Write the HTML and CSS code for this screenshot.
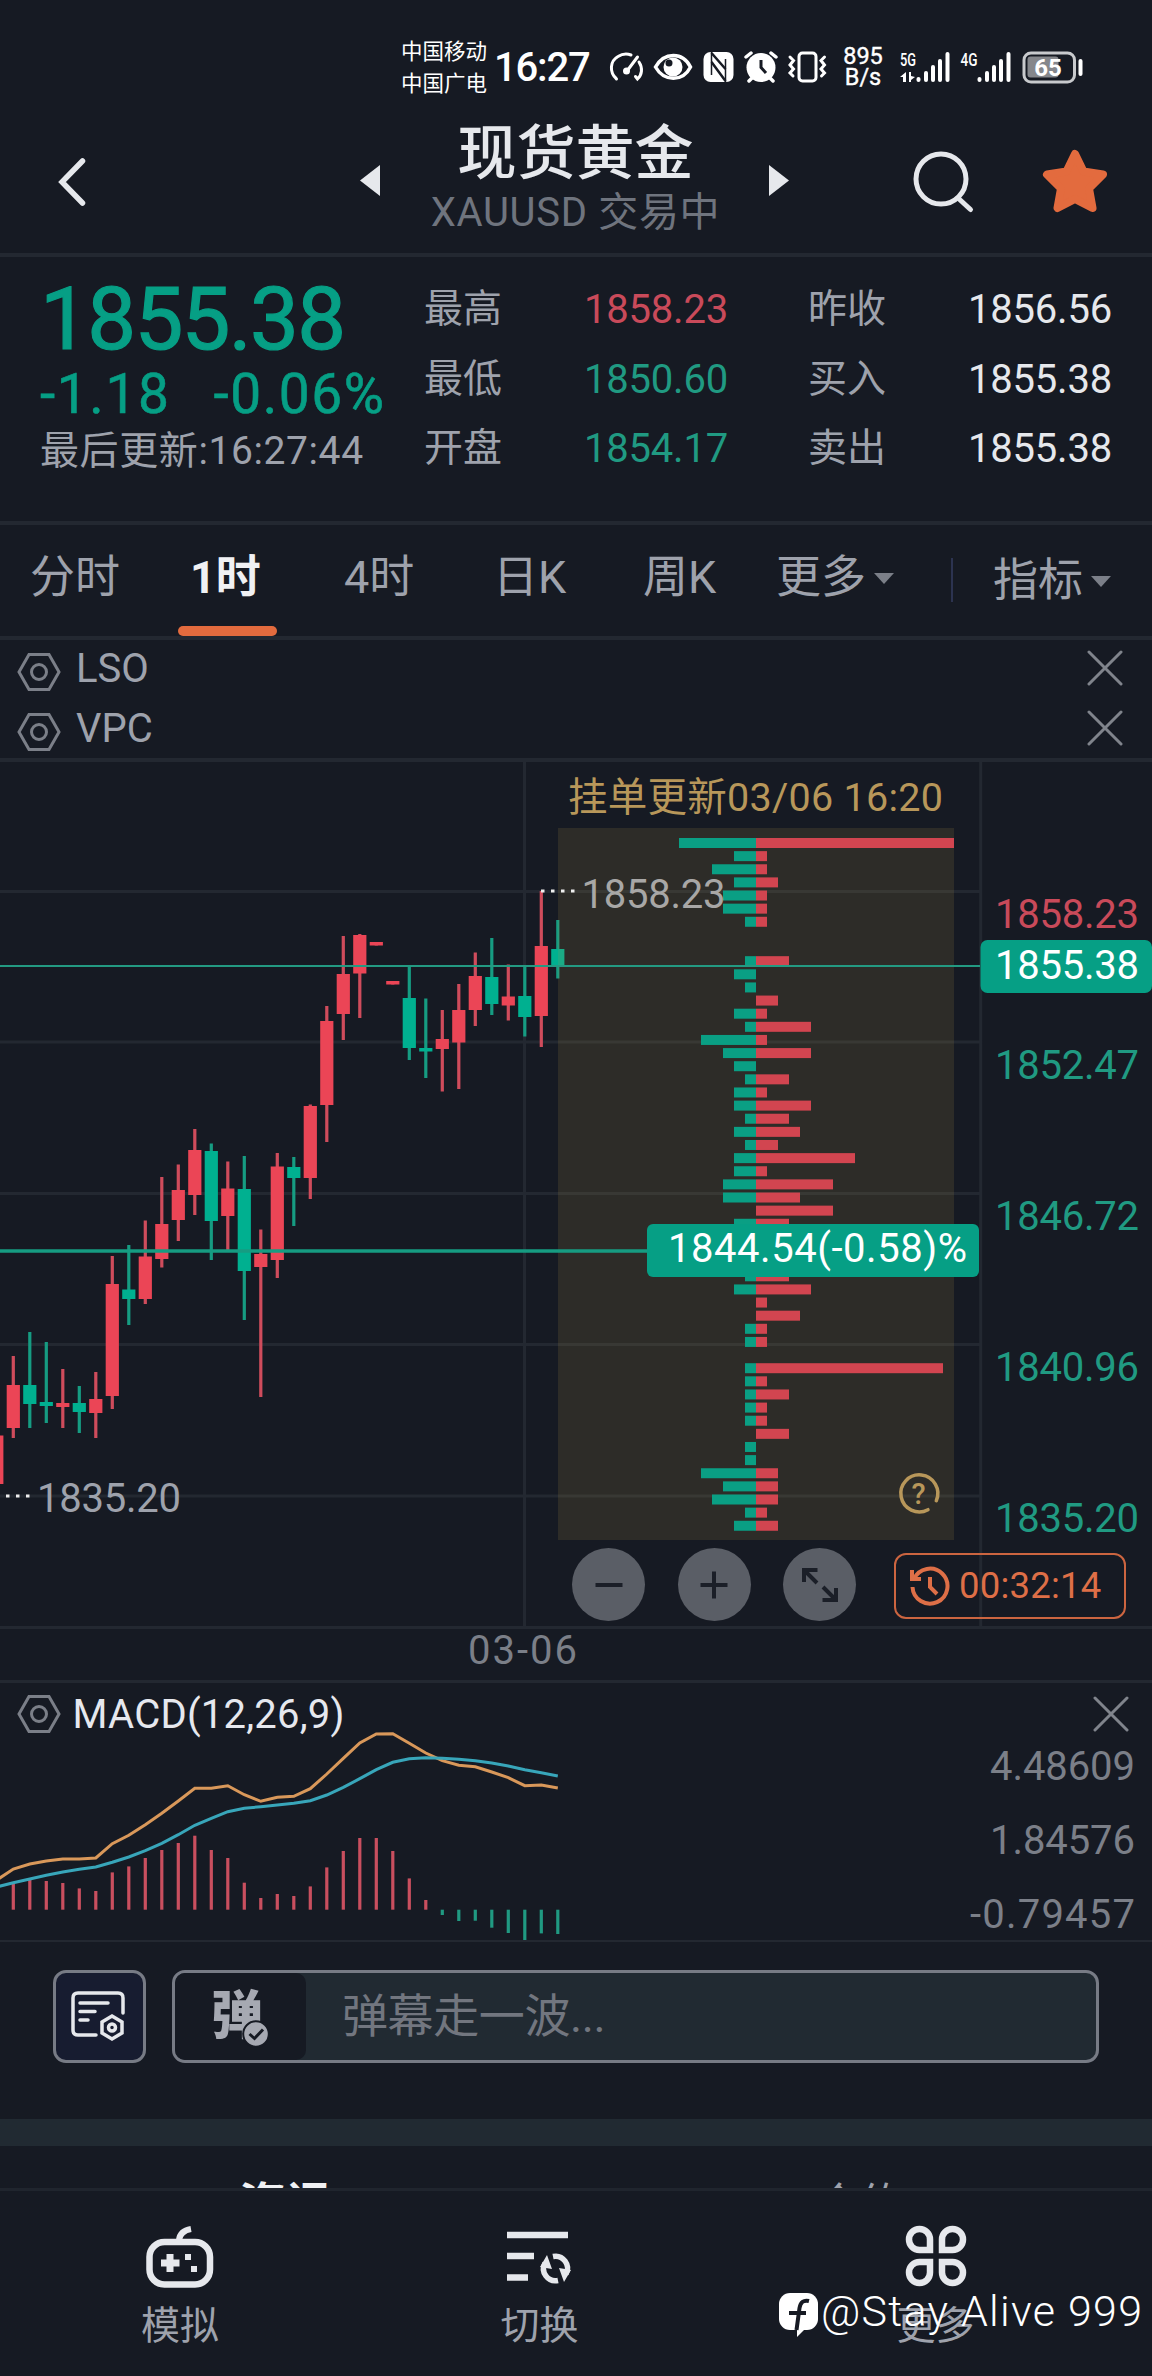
FILE: index.html
```html
<!DOCTYPE html>
<html lang="zh-CN">
<head>
  <meta charset="UTF-8" />
  <meta name="viewport" content="width=device-width, initial-scale=1.0" />
  <title>现货黄金 XAUUSD</title>
  <link rel="stylesheet" href="styles.css">
</head>
<body>
  <svg width="0" height="0" class="defs">
    <symbol id="hex" viewBox="0 0 44 40">
      <path d="M12 2.500H32L42 20L32 37.500H12L2 20Z" fill="none" stroke="#7b7f88" stroke-width="3" />
      <circle cx="22" cy="20" r="7.500" fill="none" stroke="#7b7f88" stroke-width="3" />
    </symbol>
    <symbol id="cross" viewBox="0 0 36 36">
      <path d="M2 2L34 34M34 2L2 34" fill="none" stroke="#80848c" stroke-width="3" stroke-linecap="round" />
    </symbol>
  </svg>

  <div class="status-bar">
    <div class="carrier"><span>中国移动</span><span>中国广电</span></div>
    <div class="clock">16:27</div>
    <svg class="status-icons" width="222" height="36" viewBox="608 49 222 36">
      <g fill="none" stroke="#fff" stroke-width="3" stroke-linecap="round">
        <path d="M616.500 79L614.500 76.500M616.500 79C609 72 610 61 618 56.500C622 54 627 53.500 631 55M639 62C643 68 642 75 637.500 79L635.500 76.500" />
        <path d="M627 71L637.500 57" />
      </g>
      <circle cx="626.500" cy="71" r="3.500" fill="#fff" />
      <path d="M655.500 67C664 51.500 683 51.500 690.500 67C683 82 664 82 655.500 67Z" fill="none" stroke="#fff" stroke-width="3.500" />
      <circle cx="673" cy="67" r="9.500" fill="#fff" />
      <circle cx="669" cy="63" r="3.500" fill="#161a23" />
      <rect x="703.500" y="52" width="30" height="30" rx="7" fill="#fff" />
      <path d="M711.500 52V75M725.500 82V59" fill="none" stroke="#161a23" stroke-width="1.500" />
      <path d="M711.500 53L725.500 69M711.500 62L725.500 81" fill="none" stroke="#161a23" stroke-width="2.500" />
      <circle cx="761" cy="67.500" r="14.500" fill="#fff" />
      <path d="M746 57L751 53M776 57L771 53M752 78L749 81M770 78L773 81" stroke="#fff" stroke-width="3.500" stroke-linecap="round" />
      <path d="M761 60V67.500L766 73" fill="none" stroke="#161a23" stroke-width="3" />
      <rect x="799" y="53" width="17" height="28" rx="3.500" fill="none" stroke="#fff" stroke-width="3" />
      <path d="M790 57L793.500 60.500L790 65L793.500 69L790 73L793 76M824.500 57L821 60.500L824.500 65L821 69L824.500 73L821.500 76" fill="none" stroke="#fff" stroke-width="3" stroke-linecap="round" />
    </svg>
    <div class="speed"><span>895</span><span>B/s</span></div>
    <svg class="signals" width="186" height="40" viewBox="898 47 186 40">
      <g fill="#fff">
        <text x="900" y="65.500" class="net" textLength="16" lengthAdjust="spacingAndGlyphs">5G</text>
        <path d="M906 72V82H903V77H900ZM909 82V72H911V76L915 77L911 80V82Z" />
        <rect x="916.500" y="77" width="4" height="5" rx="2" />
        <rect x="924" y="71" width="4" height="11" rx="2" />
        <rect x="931" y="65" width="4" height="17" rx="2" />
        <rect x="938" y="59" width="4" height="23" rx="2" />
        <rect x="945.500" y="52" width="4" height="30" rx="2" />
        <text x="960.500" y="65.500" class="net" textLength="17" lengthAdjust="spacingAndGlyphs">4G</text>
        <rect x="977.500" y="77" width="4" height="5" rx="2" />
        <rect x="985" y="71" width="4" height="11" rx="2" />
        <rect x="992" y="65" width="4" height="17" rx="2" />
        <rect x="999" y="59" width="4" height="23" rx="2" />
        <rect x="1006.500" y="52" width="4" height="30" rx="2" />
        <rect x="1078.500" y="59" width="4" height="17" rx="2" />
      </g>
      <rect x="1027.500" y="56.500" width="31" height="21" rx="3" fill="#85878c" />
      <rect x="1024" y="53" width="50.500" height="29" rx="7" fill="none" stroke="#c8cacd" stroke-width="3" />
      <text x="1048" y="76" class="battery">65</text>
    </svg>
  </div>

  <header class="header">
    <svg class="back" width="34" height="54" viewBox="0 0 34 54"><path d="M28.500 6L8 27L28.500 48" /></svg>
    <svg class="prev" width="20" height="31" viewBox="0 0 20 31"><path d="M20 0V31L0 15.500Z" /></svg>
    <div class="title">
      <h1>现货黄金</h1>
      <p>XAUUSD 交易中</p>
    </div>
    <svg class="next" width="20" height="31" viewBox="0 0 20 31"><path d="M0 0V31L20 15.500Z" /></svg>
    <svg class="search" width="64" height="66" viewBox="0 0 64 66"><circle cx="30" cy="31" r="25" /><path d="M47 50L59.500 61.500" /></svg>
    <svg class="star" width="66" height="64" viewBox="0 0 66 64">
      <path d="M33 5L41.500 22.500L61 25.500L47 39.500L50.500 59L33 50L15.500 59L19 39.500L5 25.500L24.500 22.500Z" />
    </svg>
  </header>

  <section class="quote">
    <div class="price">
      <div class="last">1855.38</div>
      <div class="change"><span>-1.18</span><span>-0.06%</span></div>
      <div class="updated">最后更新:16:27:44</div>
    </div>
    <dl class="stats">
      <dt>最高</dt><dd class="red">1858.23</dd>
      <dt>昨收</dt><dd>1856.56</dd>
      <dt>最低</dt><dd class="green">1850.60</dd>
      <dt>买入</dt><dd>1855.38</dd>
      <dt>开盘</dt><dd class="green">1854.17</dd>
      <dt>卖出</dt><dd>1855.38</dd>
    </dl>
  </section>

  <nav class="periods">
    <a>分时</a>
    <a class="active">1时</a>
    <a>4时</a>
    <a>日K</a>
    <a>周K</a>
    <a>更多<i class="caret"></i></a>
    <a class="indicator">指标<i class="caret"></i></a>
  </nav>

  <section class="studies">
    <div class="study">
      <svg class="hex" width="44" height="40"><use href="#hex" /></svg>
      <span>LSO</span>
      <svg class="cross" width="36" height="36"><use href="#cross" /></svg>
    </div>
    <div class="study">
      <svg class="hex" width="44" height="40"><use href="#hex" /></svg>
      <span>VPC</span>
      <svg class="cross" width="36" height="36"><use href="#cross" /></svg>
    </div>
  </section>

  <section class="chart">
    <svg width="1152" height="864" viewBox="0 0 1152 864">
      <path class="grid" d="M0 129.500H980M0 280H980M0 431.500H980M0 582.500H980M0 734H980M524.500 0V864M980.700 0V864" />
      <g id="candles"></g>
      <rect x="558" y="66" width="396" height="712" fill="#b69248" fill-opacity=".15" />
      <g id="profile"></g>

      <path d="M0 204H980" stroke="#239a82" stroke-width="2" />
      <path d="M0 489H648" stroke="#169c82" stroke-width="3.500" />
      <path d="M541 129H575" stroke="#eee" stroke-width="3" stroke-dasharray="3.500 6.500" />
      <path d="M6 734H31" stroke="#eee" stroke-width="3" stroke-dasharray="3.500 6.500" />

      <text x="568" y="49" class="gold" textLength="375">挂单更新03/06 16:20</text>
      <text x="581.500" y="146" fill="#a8a7a6" textLength="144">1858.23</text>
      <text x="37" y="750" fill="#9ea2ac" textLength="144">1835.20</text>
      <text x="995" y="166" fill="#c94a5a" textLength="144">1858.23</text>
      <g fill="#209a82">
        <text x="995" y="317" textLength="144">1852.47</text>
        <text x="995" y="468" textLength="144">1846.72</text>
        <text x="995" y="619" textLength="144">1840.96</text>
        <text x="995" y="770" textLength="144">1835.20</text>
      </g>
      <rect x="980.500" y="178" width="171.500" height="53" rx="7" fill="#069f85" />
      <text x="995" y="217" fill="#fff" textLength="144">1855.38</text>
      <rect x="647" y="462" width="332" height="53" rx="6" fill="#069f85" />
      <text x="668" y="500" fill="#fff" textLength="299">1844.54(-0.58)%</text>

      <path d="M936.300 738.700A18.500 18.500 0 1 0 928 747.700" fill="none" stroke="#b8975a" stroke-width="3.500" stroke-linecap="round" />
      <text x="918.500" y="742" class="help">?</text>
    </svg>
    <div class="zoom">
      <button><svg width="40" height="40" viewBox="0 0 40 40"><path d="M6.500 20H33.500" /></svg></button>
      <button><svg width="40" height="40" viewBox="0 0 40 40"><path d="M6.500 20H33.500M20 6.500V33.500" /></svg></button>
      <button><svg width="40" height="40" viewBox="0 0 40 40"><path d="M17 18L5 6M17.500 5H4V17M23 22L35 34M22.500 35H36V23" /></svg></button>
    </div>
    <div class="timer">
      <svg width="42" height="42" viewBox="0 0 42 42"><path d="M5 14A17.500 17.500 0 1 1 3.500 22M3 5V14H12M21 12V22L28 29" /></svg>
      <span>00:32:14</span>
    </div>
  </section>

  <div class="date">03-06</div>

  <section class="macd">
    <svg width="1152" height="257" viewBox="0 0 1152 257">
      <g id="histogram"></g>
      <polyline id="dif" class="dif" />
      <polyline id="dea" class="dea" />
      <use href="#hex" x="17" y="11" width="44" height="40" />
      <use href="#cross" x="1093" y="13" width="36" height="36" />
      <text x="72.500" y="45" fill="#e6e8ee" textLength="272">MACD(12,26,9)</text>
      <g fill="#7b7f88">
        <text x="990" y="97" textLength="145">4.48609</text>
        <text x="990" y="171" textLength="145">1.84576</text>
        <text x="970" y="245" textLength="165">-0.79457</text>
      </g>
    </svg>
  </section>

  <section class="comment">
    <div class="note">
      <svg width="60" height="60" viewBox="0 0 60 60">
        <path d="M54 26V11Q54 6 49 6H9Q4 6 4 11V43Q4 48 9 48H27M11 16H39M11 24.500H26M11 33H19" />
        <path d="M43 29L53 35V46L43 52L33 46V35Z" />
        <circle cx="43" cy="40.500" r="3.500" />
      </svg>
    </div>
    <div class="field">
      <div class="bullet">弹
        <svg width="28" height="28" viewBox="0 0 28 28"><circle cx="14" cy="14" r="12.800" fill="#a6a9b2" stroke="#161a23" stroke-width="2" /><path d="M7.500 14L12.500 18.500L21 9.500" fill="none" stroke="#161a23" stroke-width="3" /></svg>
      </div>
      <span>弹幕走一波...</span>
    </div>
  </section>

  <div class="news">
    <b>资讯</b>
    <span>合约</span>
  </div>

  <footer class="tabbar">
    <div>
      <svg width="70" height="66" viewBox="0 0 70 66">
        <rect x="4.500" y="19" width="60.500" height="42.500" rx="15" fill="none" stroke="#e6e8ec" stroke-width="6.500" />
        <path d="M34 17Q35 8 46 6" fill="none" stroke="#e6e8ec" stroke-width="6" />
        <path d="M40 31H46V37H40ZM46 43H52V49H46Z" fill="#e6e8ec" />
        <path d="M16 40H34.500M25 31V49" stroke="#e6e8ec" stroke-width="7" />
      </svg>
      <span>模拟</span>
    </div>
    <div>
      <svg width="70" height="66" viewBox="0 0 70 66">
        <path d="M2 12H63M2 33H29M2 54.500H23" stroke="#e6e8ec" stroke-width="6.500" />
        <path d="M48 33.500A12 12 0 0 1 61 51M53 57.500A12 12 0 0 1 40 40" fill="none" stroke="#e6e8ec" stroke-width="5.500" />
        <path d="M35 44L42 32L47 46ZM66 47L59 59L54 45Z" fill="#e6e8ec" />
      </svg>
      <span>切换</span>
    </div>
    <div>
      <svg width="70" height="66" viewBox="0 0 70 66">
        <g fill="none" stroke="#e6e8ec" stroke-width="6.500">
          <path d="M29 27V16.500A10.500 10.500 0 1 0 18.500 27Z" />
          <path d="M41 27V16.500A10.500 10.500 0 1 1 51.500 27Z" />
          <path d="M29 39V49.500A10.500 10.500 0 1 1 18.500 39Z" />
          <path d="M41 39V49.500A10.500 10.500 0 1 0 51.500 39Z" />
        </g>
      </svg>
      <span>更多</span>
    </div>
  </footer>

  <svg class="watermark" width="373" height="64" viewBox="0 0 373 64">
    <rect y="10" width="39" height="37" rx="11" fill="#fff" />
    <path d="M18 45V54L28 44Z" fill="#fff" />
    <path d="M30 18Q22 16 20.500 25L17.500 47M10 30H27" fill="none" stroke="#161a23" stroke-width="4" />
    <text x="42" y="43" textLength="321">@Stay Alive 999</text>
  </svg>

  <script src="script.js"></script>
</body>
</html>
```
FILE: styles.css
```css
* {
  box-sizing: border-box;
}
body {
  margin: 0;
  width: 1152px;
  height: 2376px;
  overflow: hidden;
  position: relative;
  background: #161a23;
  color: #9ea2ac;
  font-family: Roboto, "Noto Sans CJK SC", sans-serif;
  font-size: 40px;
}
svg {
  display: block;
  flex: none;
}
svg text {
  font-size: 40px;
}
.defs {
  position: absolute;
}
.red {
  color: #c94a5a;
}
.green {
  color: #209a82;
}

/* status bar */
.status-bar {
  display: flex;
  height: 110px;
  padding-left: 401px;
  color: #fff;
}
.carrier {
  display: flex;
  flex-direction: column;
  width: 93px;
  padding-top: 36px;
  font-size: 21.5px;
  line-height: 32px;
}
.clock {
  width: 114px;
  padding-top: 44px;
  font-weight: 500;
  line-height: 48px;
  letter-spacing: -1.2px;
}
.status-icons {
  margin-top: 49px;
}
.speed {
  display: flex;
  flex-direction: column;
  align-items: center;
  width: 66px;
  padding-top: 46px;
  font-size: 23.5px;
  line-height: 21px;
  -webkit-text-stroke: 0.4px #fff;
}
.signals {
  margin-top: 47px;
  margin-left: 2px;
}
.signals .net {
  font-size: 19px;
  font-weight: 500;
}
.signals .battery {
  fill: #fff;
  font-size: 24px;
  font-weight: 700;
  text-anchor: middle;
}

/* header */
.header {
  display: flex;
  align-items: flex-start;
  height: 147px;
  border-bottom: 4px solid #232831;
}
.back {
  margin: 45px 0 0 54px;
  fill: none;
  stroke: #e6e8ec;
  stroke-width: 5.5;
  stroke-linecap: round;
}
.prev, .next {
  margin-top: 55px;
  fill: #e6e8ec;
}
.prev {
  margin-left: 272px;
}
.title {
  width: 389px;
  padding: 14px 0 0 2px;
  text-align: center;
}
.title h1 {
  margin: 0 0 5px;
  color: #e6e8ec;
  font-size: 59px;
  font-weight: 500;
  line-height: 60px;
}
.title p {
  margin: 0;
  color: #6f747e;
  line-height: 48px;
  letter-spacing: 0.7px;
}
.search {
  margin: 38px 0 0 122px;
  fill: none;
  stroke: #e6e8ec;
  stroke-width: 5;
  stroke-linecap: round;
}
.star {
  margin: 39px 0 0 67px;
  fill: #e36b3e;
  stroke: #e36b3e;
  stroke-width: 8;
  stroke-linejoin: round;
}

/* quote */
.quote {
  display: flex;
  height: 268px;
  padding: 17px 0 0 40px;
  border-bottom: 4px solid #232831;
}
.price {
  width: 384px;
  color: #069f85;
}
.last {
  font-size: 87px;
  line-height: 90px;
  letter-spacing: -1.7px;
  -webkit-text-stroke: 1.2px #069f85;
}
.change {
  display: flex;
  gap: 43px;
  font-size: 55px;
  line-height: 60px;
  letter-spacing: 1.6px;
  white-space: nowrap;
  -webkit-text-stroke: 0.6px #069f85;
}
.updated {
  padding-top: 3px;
  color: #9ea2ac;
  font-size: 39px;
  line-height: 48px;
  letter-spacing: 0.6px;
}
.stats {
  display: grid;
  grid-template-columns: 100px 204px 180px 204px;
  grid-template-rows: repeat(3, 69.5px);
  margin: 0;
  padding-top: 1px;
  line-height: 69.5px;
}
.stats dt {
  font-size: 39px;
}
.stats dt:nth-of-type(even) {
  padding-left: 80px;
}
.stats dd {
  margin: 0;
  letter-spacing: -0.2px;
  text-align: right;
}
.stats dd:nth-of-type(even) {
  color: #e6e8ec;
}

/* period tabs */
.periods {
  display: grid;
  grid-template-columns: 160px 154px 149px 150px 133px 174px auto;
  height: 115px;
  padding-left: 30px;
  border-bottom: 4px solid #232831;
  font-size: 45px;
  line-height: 105px;
}
.periods a {
  position: relative;
}
.periods .active {
  color: #f0f1f4;
  font-weight: 700;
}
.periods .active::after {
  content: "";
  position: absolute;
  left: -12px;
  bottom: 0;
  width: 99px;
  height: 10px;
  border-radius: 5px;
  background: #e36b3e;
}
.caret {
  display: inline-block;
  margin-left: 8px;
  border: 10px solid transparent;
  border-top: 11px solid #7b7f88;
  border-bottom: 0;
  vertical-align: 9px;
}
.periods .indicator {
  padding: 3px 0 0 43px;
}
.periods .indicator::before {
  content: "";
  position: absolute;
  left: 1px;
  top: 33px;
  width: 2px;
  height: 44px;
  background: #2c3350;
}

/* studies */
.studies {
  height: 118px;
}
.study {
  display: flex;
  height: 59.5px;
  padding-left: 17px;
  line-height: 57px;
}
.study span {
  width: 1026px;
  padding-left: 15px;
}
.study .hex {
  margin-top: 12px;
}
.study .cross {
  margin: 10px 0 0 0;
}

/* chart */
.chart {
  position: relative;
  height: 871px;
  border-top: 4px solid #232831;
  border-bottom: 3px solid #232831;
}
.grid {
  fill: none;
  stroke: #232831;
  stroke-width: 3;
}
.chart .gold {
  fill: #b8975a;
  font-size: 39.5px;
}
.chart .help {
  fill: #b8975a;
  font-size: 29px;
  font-weight: 500;
  text-anchor: middle;
}
.zoom {
  position: absolute;
  left: 572px;
  top: 786px;
  display: flex;
  gap: 32.5px;
}
.zoom button {
  display: flex;
  align-items: center;
  justify-content: center;
  width: 73px;
  height: 73px;
  padding: 0;
  border: none;
  border-radius: 50%;
  background: #5a5e66;
}
.zoom path {
  fill: none;
  stroke: #1b1f28;
  stroke-width: 4;
}
.timer {
  position: absolute;
  left: 894px;
  top: 791px;
  display: flex;
  align-items: center;
  width: 232px;
  height: 66px;
  padding-left: 13px;
  border: 2px solid #cc6540;
  border-radius: 12px;
  color: #de6f47;
  font-size: 36.5px;
}
.timer span {
  padding: 0 0 2px 8px;
  letter-spacing: 0.2px;
}
.timer path {
  fill: none;
  stroke: #de6f47;
  stroke-width: 4;
}
.date {
  height: 51px;
  padding-left: 468px;
  color: #7b7f88;
  line-height: 44px;
  letter-spacing: 2px;
}

/* macd */
.macd {
  height: 262px;
  border-top: 3px solid #232831;
  border-bottom: 2px solid #232831;
}
.dif, .dea {
  fill: none;
  stroke-width: 3;
}
.dif {
  stroke: #d9985a;
}
.dea {
  stroke: #38a6ba;
}

/* comment */
.comment {
  display: flex;
  gap: 26px;
  height: 177px;
  padding: 28px 0 0 53px;
}
.note, .field {
  height: 93px;
  border: 3px solid #777b85;
  border-radius: 13px;
}
.note {
  display: flex;
  align-items: center;
  justify-content: center;
  width: 93px;
  padding-right: 2px;
  background: #171c30;
}
.note path, .note circle {
  fill: none;
  stroke: #e6e8ec;
  stroke-width: 3.5;
  stroke-linecap: round;
}
.field {
  display: flex;
  width: 927px;
  background: #212a32;
  color: #72767f;
  font-size: 46px;
  line-height: 87px;
}
.bullet {
  position: relative;
  width: 131px;
  padding-left: 36px;
  border-radius: 10px;
  background: #161a23;
  color: #a6a9b2;
  font-size: 52px;
  font-weight: 900;
}
.bullet svg {
  position: absolute;
  left: 67px;
  top: 47px;
}
.field span {
  padding-left: 36px;
  letter-spacing: -0.4px;
}

/* news tabs, cut off by the tab bar */
.news {
  display: grid;
  grid-template-columns: 577px auto;
  height: 69px;
  padding: 27px 0 0 239px;
  border-top: 27px solid #212a32;
  font-size: 44px;
  line-height: 64px;
  overflow: hidden;
}
.news b {
  color: #f0f1f4;
  font-size: 47px;
}

/* bottom tab bar */
.tabbar {
  display: grid;
  grid-template-columns: 360px 359px 433px;
  height: 188px;
  padding-top: 32px;
  border-top: 3px solid #20252e;
  font-size: 39px;
  line-height: 48px;
}
.tabbar div {
  display: flex;
  flex-direction: column;
  align-items: center;
  gap: 13px;
}
.watermark {
  position: absolute;
  left: 779px;
  top: 2283px;
}
.watermark text {
  fill: #fff;
  font-size: 43px;
  font-weight: 300;
}
```
FILE: script.js
```js
const NS = 'http://www.w3.org/2000/svg';
const STEP = 16.5;
const FIRST = 13.3;

// high, body top, body bottom, low, up (1) or down (0)
const candles = [
  [673.5, 673.5, 722, 722, 1],
  [594, 623, 666, 676, 1],
  [570, 623, 642, 666, 0],
  [580, 640, 644, 661, 0],
  [607, 641, 645, 666, 1],
  [624, 641, 650, 671, 0],
  [610, 637, 651, 676, 1],
  [494, 522, 634, 647, 1],
  [483, 527.5, 537, 563, 0],
  [458.5, 494.5, 537, 542, 1],
  [415, 462, 497, 505.5, 1],
  [402.5, 428, 458, 479, 1],
  [367, 388, 433, 453, 1],
  [381.5, 389, 459, 498, 0],
  [399.5, 426.5, 454, 488.5, 1],
  [394, 427, 509, 558, 0],
  [467.5, 492, 505, 635, 1],
  [391, 404.5, 498, 516, 1],
  [395, 405, 416, 464, 0],
  [342.5, 344, 416, 437, 1],
  [244, 259, 343, 380, 1],
  [174, 212, 252, 278, 1],
  [172, 173, 211.5, 256, 1],
  [180, 180, 183.5, 183.5, 1],
  [219, 219, 222.5, 222.5, 1],
  [205, 236, 286, 298, 0],
  [236.5, 286, 289.5, 316, 0],
  [248, 277, 287, 329.5, 1],
  [222, 248, 280.5, 327, 1],
  [190.5, 214, 248, 264, 1],
  [176, 215, 242, 253, 0],
  [202.5, 234.5, 243.5, 258.5, 1],
  [205, 234, 255, 274.5, 0],
  [129, 184, 254, 285, 1],
  [158, 187, 204, 216.5, 0]
];

// pending orders per price level: buy, sell
const orders = [
  [7, 18], [2, 1], [4, 1], [2, 2], [3, 1], [3, 1], [1, 1], [0, 0], [0, 0], [1, 3],
  [2, 0], [1, 0], [0, 2], [2, 1], [1, 5], [5, 1], [3, 5], [2, 0], [1, 3], [2, 1],
  [2, 5], [1, 3], [2, 4], [1, 2], [2, 9], [2, 1], [3, 7], [3, 4], [0, 7], [2, 3],
  [3, 5], [1, 2], [1, 3], [1, 3], [2, 5], [0, 1], [0, 4], [1, 1], [1, 1], [0, 0],
  [1, 17], [1, 1], [1, 3], [1, 1], [1, 1], [0, 3], [1, 0], [1, 0], [5, 2], [3, 2],
  [4, 2], [1, 1], [2, 2]
];

const histogram = [
  25.7, 29.7, 28.7, 26.7, 21.3, 18.7, 37.3, 43.3, 51.7, 59.7, 66.7, 74, 59.7, 51.7, 27, 11.7, 15.7,
  13.7, 23.3, 42.3, 58.7, 71.7, 71.7, 58.7, 31.3, 9.7, -5.3, -11.3, -11, -18, -23.3, -31.3, -23.7, -24.3
];

const dif = [
  197, 186, 181, 178, 176, 176, 175, 160.7, 152.3, 141.7, 130.3, 118, 105.3, 105.3, 102.7, 111.7, 118.3,
  114.3, 113.3, 105.7, 91, 75.3, 60, 51, 50.7, 60.3, 70, 77.7, 82.3, 83.7, 89, 94.7, 102.7, 102, 105
];

const dea = [
  204, 199.7, 196, 192.3, 189, 186.3, 184, 179.3, 174, 167.7, 160.3, 151.7, 142.3, 135.3, 128.7, 125.3, 123.7,
  122, 120.3, 117.7, 112, 104.3, 95.7, 86.7, 79.3, 75.7, 74.7, 75.3, 76.3, 77.7, 80, 83, 86.7, 89.7, 93
];

function bar(parent, x, y, width, height, fill) {
  const rect = document.createElementNS(NS, 'rect');
  rect.setAttribute('x', x);
  rect.setAttribute('y', y);
  rect.setAttribute('width', width);
  rect.setAttribute('height', height);
  rect.setAttribute('fill', fill);
  parent.appendChild(rect);
}

const candleGroup = document.getElementById('candles');
candles.forEach(([high, top, bottom, low, up], i) => {
  const x = FIRST + (i - 1) * STEP;
  bar(candleGroup, x - 1.6, high, 3.2, low - high, up ? '#cf4c5c' : '#169c82');
  bar(candleGroup, x - 6.6, top, 13.2, bottom - top, up ? '#eb4556' : '#00b090');
});

const profileGroup = document.getElementById('profile');
orders.forEach(([buy, sell], i) => {
  const y = 76 + i * 13.13;
  bar(profileGroup, 756 - buy * 11, y, buy * 11, 10, '#0a9f84');
  bar(profileGroup, 756, y, sell * 11, 10, '#d24550');
});

const histogramGroup = document.getElementById('histogram');
histogram.forEach((value, i) => {
  const x = FIRST + i * STEP - 1.6;
  const y = value > 0 ? 226.7 - value : 226.7;
  bar(histogramGroup, x, y, 3.2, Math.abs(value), value > 0 ? '#c94f5f' : '#209a82');
});

function drawLine(id, values) {
  const points = values.map((y, i) => `${FIRST + (i - 1) * STEP},${y}`).join(' ');
  document.getElementById(id).setAttribute('points', points);
}

drawLine('dif', dif);
drawLine('dea', dea);
```
